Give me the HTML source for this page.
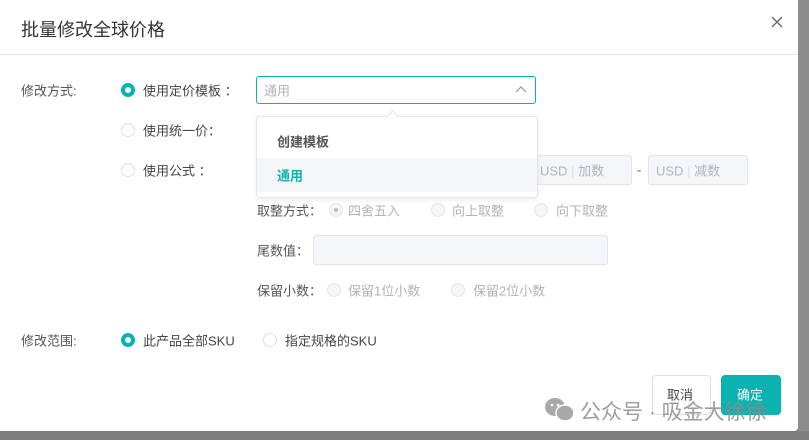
<!DOCTYPE html>
<html><head><meta charset="utf-8"><style>
*{margin:0;padding:0;box-sizing:border-box}
body{width:809px;height:440px;overflow:hidden;background:#8d8d8d;font-family:"Liberation Sans","Noto Sans CJK SC",sans-serif;font-size:13px;color:#555;position:relative}
.a{position:absolute;white-space:nowrap}
.modal{position:absolute;left:0;top:0;width:798px;height:431px;background:#fff;border-radius:0 0 4px 0}
.r{position:absolute;width:14px;height:14px;border-radius:50%;border:1px solid #dcdfe6;background:#fff}
.r.on{border:4px solid #0ab3b0}
.r.dis{background:#f5f6fa;border-color:#e4e6eb}
.r.dis.c::after{content:"";position:absolute;left:4px;top:4px;width:4px;height:4px;border-radius:50%;background:#bbb}
.box{position:absolute;background:#f5f6fa;border:1px solid #e3e5ea;border-radius:3px}
.g{color:#b0b3b8}
.t{transform:translateY(-50%)}
</style></head><body>
<div class="a" style="left:0;top:431px;width:809px;height:9px;background:#7f7f7f"></div>
<div class="modal">
<div class="a" style="left:21px;top:16px;font-size:18px;color:#333">批量修改全球价格</div>
<svg class="a" style="left:771px;top:16px" width="12" height="12"><path d="M1 1L11 11M11 1L1 11" stroke="#666" stroke-width="1.3"/></svg>
<div class="a" style="left:0;top:54px;width:798px;height:1px;background:#e4e4ea"></div>

<div class="a t" style="left:21px;top:90px">修改方式:</div>
<div class="r on" style="left:121px;top:83px"></div>
<div class="a t" style="left:143px;top:90px;color:#444">使用定价模板 ：</div>
<div class="a" style="left:256px;top:76px;width:280px;height:28px;border:1px solid #0ab3b0;border-radius:3px"></div>
<div class="a t g" style="left:264px;top:90px">通用</div>
<svg class="a" style="left:515px;top:85px" width="12" height="8"><path d="M1 7L6 2L11 7" fill="none" stroke="#999" stroke-width="1.2"/></svg>

<div class="r" style="left:121px;top:123px"></div>
<div class="a t" style="left:143px;top:130px;color:#444">使用统一价：</div>
<div class="r" style="left:121px;top:163px"></div>
<div class="a t" style="left:143px;top:170px;color:#444">使用公式 ：</div>

<div class="box" style="left:517px;top:155px;width:115px;height:30px"></div>
<div class="a t g" style="left:540px;top:170px">USD <span style="color:#ddd">|</span> 加数</div>
<div class="a t" style="left:637px;top:170px">-</div>
<div class="box" style="left:648px;top:155px;width:100px;height:30px"></div>
<div class="a t g" style="left:656px;top:170px">USD <span style="color:#ddd">|</span> 减数</div>

<div class="a" style="left:256px;top:116px;width:282px;height:82px;background:#fff;border:1px solid #e4e6eb;border-radius:4px;box-shadow:0 2px 6px rgba(0,0,0,.08)"></div>
<div class="a" style="left:388px;top:112px;width:9px;height:9px;background:#fff;border-left:1px solid #e4e6eb;border-top:1px solid #e4e6eb;transform:rotate(45deg)"></div>
<div class="a t" style="left:277px;top:141px;font-weight:bold;color:#555">创建模板</div>
<div class="a" style="left:257px;top:158px;width:280px;height:34px;background:#f5f6f9"></div>
<div class="a t" style="left:277px;top:175px;font-weight:bold;color:#0ab3b0">通用</div>

<div class="a t" style="left:257px;top:210px">取整方式：</div>
<div class="r dis c" style="left:329px;top:203px"></div>
<div class="a t g" style="left:348px;top:210px">四舍五入</div>
<div class="r dis" style="left:431px;top:203px"></div>
<div class="a t g" style="left:452px;top:210px">向上取整</div>
<div class="r dis" style="left:534px;top:203px"></div>
<div class="a t g" style="left:556px;top:210px">向下取整</div>

<div class="a t" style="left:257px;top:250px">尾数值：</div>
<div class="box" style="left:313px;top:235px;width:295px;height:30px"></div>

<div class="a t" style="left:257px;top:290px">保留小数：</div>
<div class="r dis" style="left:327px;top:283px"></div>
<div class="a t g" style="left:348px;top:290px">保留1位小数</div>
<div class="r dis" style="left:451px;top:283px"></div>
<div class="a t g" style="left:473px;top:290px">保留2位小数</div>

<div class="a t" style="left:21px;top:340px">修改范围:</div>
<div class="r on" style="left:121px;top:333px"></div>
<div class="a t" style="left:143px;top:340px;color:#444">此产品全部SKU</div>
<div class="r" style="left:263px;top:333px"></div>
<div class="a t" style="left:285px;top:340px;color:#444">指定规格的SKU</div>

<div class="a" style="left:652px;top:375px;width:59px;height:40px;border:1px solid #dcdfe6;border-radius:4px"></div>
<div class="a t" style="left:667px;top:394px;color:#444">取消</div>
<div class="a" style="left:721px;top:375px;width:60px;height:40px;background:#0ab3b0;border-radius:4px"></div>
<div class="a t" style="left:737px;top:394px;color:#fff">确定</div>

<svg class="a" style="left:543px;top:395px" width="34" height="30"><ellipse cx="12" cy="12" rx="10" ry="9" fill="#a9a9a9"/><ellipse cx="22" cy="18" rx="9" ry="8" fill="#a9a9a9" stroke="#fff" stroke-width="1.5"/><circle cx="9" cy="10" r="1.3" fill="#fff"/><circle cx="15" cy="10" r="1.3" fill="#fff"/></svg>
<div class="a" style="left:580px;top:396px;font-size:21px;color:rgba(140,140,140,.85)">公众号 · 吸金大徐徐</div>
</div>
</body></html>
